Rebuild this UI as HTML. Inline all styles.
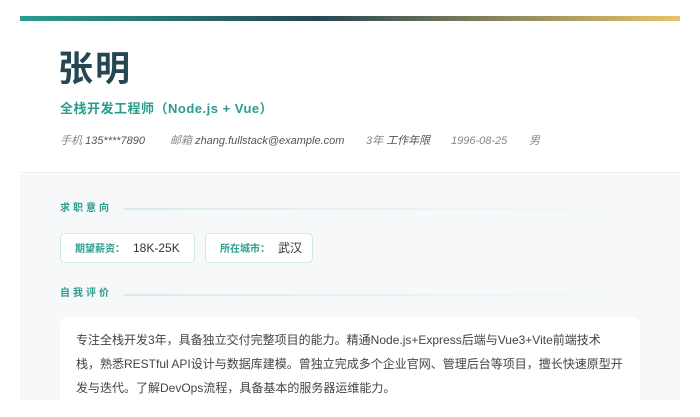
<!DOCTYPE html>
<html><head><meta charset="utf-8"><style>
*{margin:0;padding:0;box-sizing:border-box}
body{width:700px;height:400px;overflow:hidden;background:#fff;font-family:"Liberation Sans","Noto Sans CJK SC",sans-serif;position:relative}
.bar{position:absolute;left:20px;top:16px;width:660px;height:5px;background:linear-gradient(90deg,#2a9d8f 0%,#264653 45%,#e9c46a 100%)}
.head{position:absolute;left:20px;top:21px;width:660px;height:152px;background:#fff;border-bottom:1px solid #e8ecef}
.name{position:absolute;left:58px;top:48px;font-size:35px;font-weight:bold;color:#264653;letter-spacing:2px;line-height:44px}
.title{position:absolute;left:60px;top:98px;font-size:13px;font-weight:bold;color:#2a9d8f;letter-spacing:0.5px}
.meta{position:absolute;top:133px;font-size:11px;font-style:italic;color:#888;line-height:16px}
.meta b{font-weight:normal;color:#555}
.body{position:absolute;left:20px;top:174px;width:660px;height:226px;background:#f6f8fa}
.sec{position:absolute;left:60px;font-size:10px;font-weight:bold;color:#2a9d8f;letter-spacing:3px;line-height:14px}
.line{position:absolute;left:124px;width:494px;height:2px;background:linear-gradient(90deg,#d8ebe8,rgba(216,235,232,0))}
.tag{position:absolute;top:233px;height:30px;background:#fff;border:1px solid #cfe9e5;border-radius:5px;font-size:12px;color:#333;line-height:28px;padding-left:14px}
.tag span{font-size:10px;font-weight:bold;color:#2a9d8f;margin-right:8px}
.card{position:absolute;left:60px;top:317px;width:580px;height:100px;background:#fff;border-radius:8px;padding:11px 16px;font-size:12px;line-height:24px;color:#444}
</style></head><body>
<div class="bar"></div>
<div class="head"></div>
<div class="name">张明</div>
<div class="title">全栈开发工程师（Node.js + Vue）</div>
<div class="meta" style="left:60px">手机 <b>135****7890</b></div>
<div class="meta" style="left:170px">邮箱 <b>zhang.fullstack@example.com</b></div>
<div class="meta" style="left:366px">3年 <b>工作年限</b></div>
<div class="meta" style="left:451px">1996-08-25</div>
<div class="meta" style="left:529px">男</div>
<div class="body"></div>
<div class="sec" style="top:202px">求职意向</div>
<div class="line" style="top:208px"></div>
<div class="tag" style="left:60px;width:135px"><span>期望薪资：</span>18K-25K</div>
<div class="tag" style="left:205px;width:108px"><span>所在城市：</span>武汉</div>
<div class="sec" style="top:287px">自我评价</div>
<div class="line" style="top:294px"></div>
<div class="card">专注全栈开发3年，具备独立交付完整项目的能力。精通Node.js+Express后端与Vue3+Vite前端技术栈，熟悉RESTful API设计与数据库建模。曾独立完成多个企业官网、管理后台等项目，擅长快速原型开发与迭代。了解DevOps流程，具备基本的服务器运维能力。</div>
</body></html>
